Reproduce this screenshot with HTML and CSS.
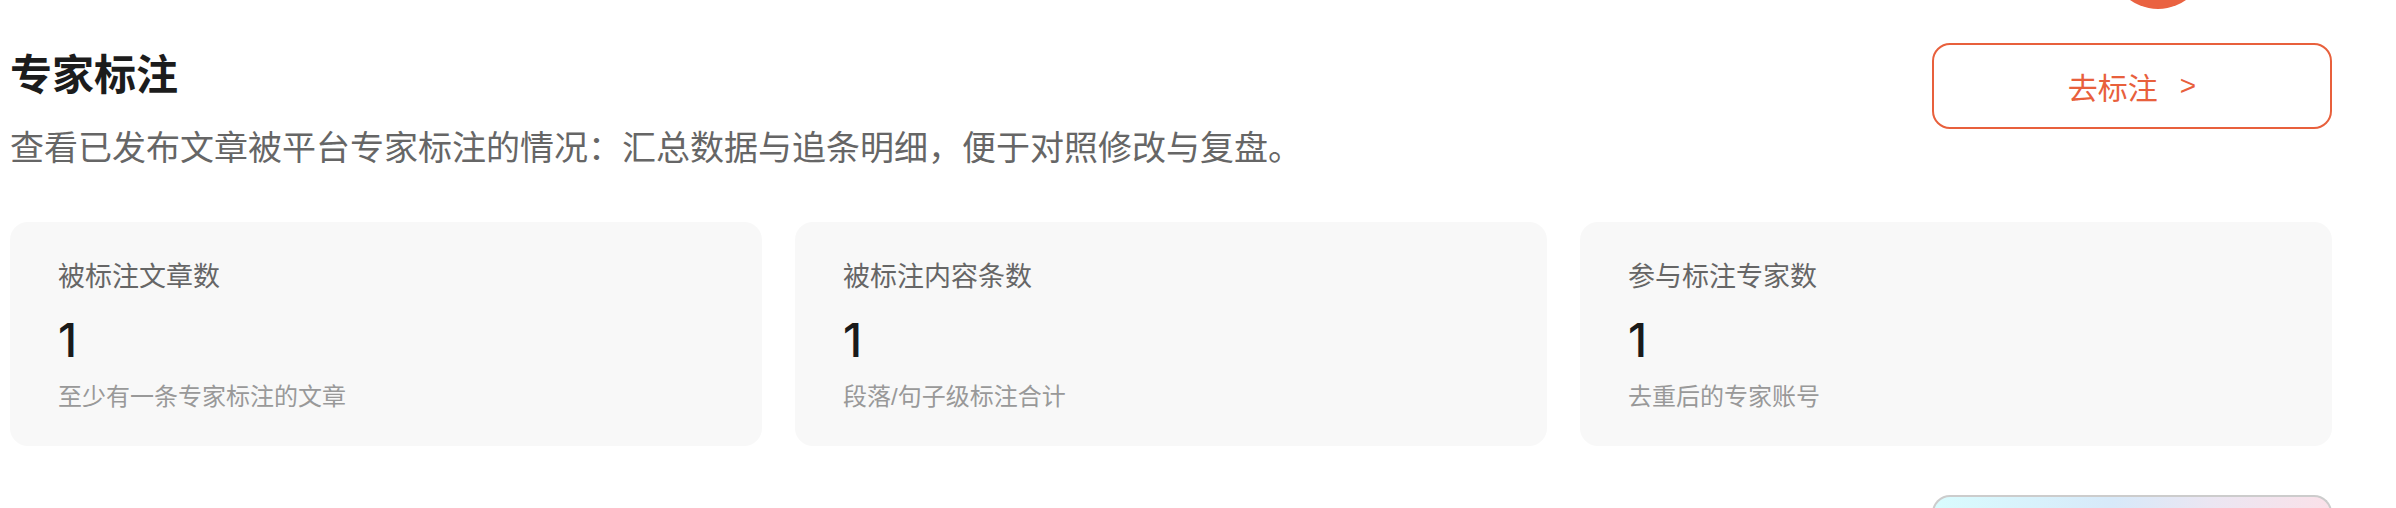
FILE: index.html
```html
<!DOCTYPE html>
<html lang="zh-CN">
<head>
    <meta charset="UTF-8">
    <meta name="viewport" content="width=device-width, initial-scale=1.0">
    <title>专家标注</title>
    <link rel="stylesheet" href="styles.css">
</head>
<body>

    <div class="avatar-dot"></div>

    <div class="page">
        <div class="header">
            <div class="header-text">
                <h1 class="title">专家标注</h1>
                <p class="subtitle">查看已发布文章被平台专家标注的情况：汇总数据与追条明细，便于对照修改与复盘。</p>
            </div>
            <button class="go-button">去标注<span class="arrow">&gt;</span></button>
        </div>

        <div class="stats">
            <div class="stat-card">
                <div class="stat-label">被标注文章数</div>
                <div class="stat-value">1</div>
                <div class="stat-hint">至少有一条专家标注的文章</div>
            </div>
            <div class="stat-card">
                <div class="stat-label">被标注内容条数</div>
                <div class="stat-value">1</div>
                <div class="stat-hint">段落/句子级标注合计</div>
            </div>
            <div class="stat-card">
                <div class="stat-label">参与标注专家数</div>
                <div class="stat-value">1</div>
                <div class="stat-hint">去重后的专家账号</div>
            </div>
        </div>

        <div class="footer-row">
            <div class="gradient-box"></div>
        </div>
    </div>

</body>
</html>
```

FILE: styles.css
```css
body {
    margin: 0;
    background: #FFFFFF;
    font-family: "Liberation Sans", "Noto Sans CJK SC", sans-serif;
    overflow: hidden;
    position: relative;
    height: 508px;
}

.avatar-dot {
    position: absolute;
    top: -87px;
    left: 2110px;
    width: 96px;
    height: 96px;
    border-radius: 50%;
    background: #EA6241;
}

.page {
    width: 2332px;
    height: 508px;
    box-sizing: border-box;
    overflow: hidden;
    padding: 43px 0 0 10px;
}

.header {
    display: flex;
    justify-content: space-between;
    align-items: flex-start;
}

.header-text {
    padding-top: 4px;
}

.title {
    margin: 0;
    font-size: 42px;
    line-height: 58px;
    font-weight: bold;
    color: #1C1C1C;
}

.subtitle {
    margin: 19px 0 0 0;
    font-size: 34px;
    line-height: 48px;
    color: #666666;
}

.go-button {
    width: 400px;
    height: 86px;
    border: 2px solid #E8603C;
    border-radius: 18px;
    background: #FFFFFF;
    color: #E8603C;
    font-family: inherit;
    font-size: 30px;
    cursor: pointer;
    display: flex;
    justify-content: center;
    align-items: center;
}

.arrow {
    margin-left: 22px;
    font-size: 28px;
}

.stats {
    display: grid;
    grid-template-columns: repeat(3, 1fr);
    gap: 33px;
    margin-top: 50px;
}

.stat-card {
    background: #F8F8F8;
    border-radius: 18px;
    padding: 36px 48px 32px 48px;
}

.stat-label {
    font-size: 27px;
    line-height: 38px;
    color: #666666;
}

.stat-value {
    margin-top: 16px;
    font-family: Inter, "Liberation Sans", sans-serif;
    font-size: 46px;
    line-height: 56px;
    font-weight: 500;
    color: #1A1A1A;
}

.stat-hint {
    margin-top: 12px;
    font-size: 24px;
    line-height: 34px;
    color: #999999;
}

.footer-row {
    display: flex;
    justify-content: flex-end;
    margin-top: 49px;
}

.gradient-box {
    width: 396px;
    height: 40px;
    border: 2px solid #CCCCCC;
    border-radius: 18px 18px 0 0;
    border-bottom: none;
    background: linear-gradient(to right, #D9FCFE, #D7E9F9 45%, #EBE6F2 70%, #FAE1E9);
}
```
